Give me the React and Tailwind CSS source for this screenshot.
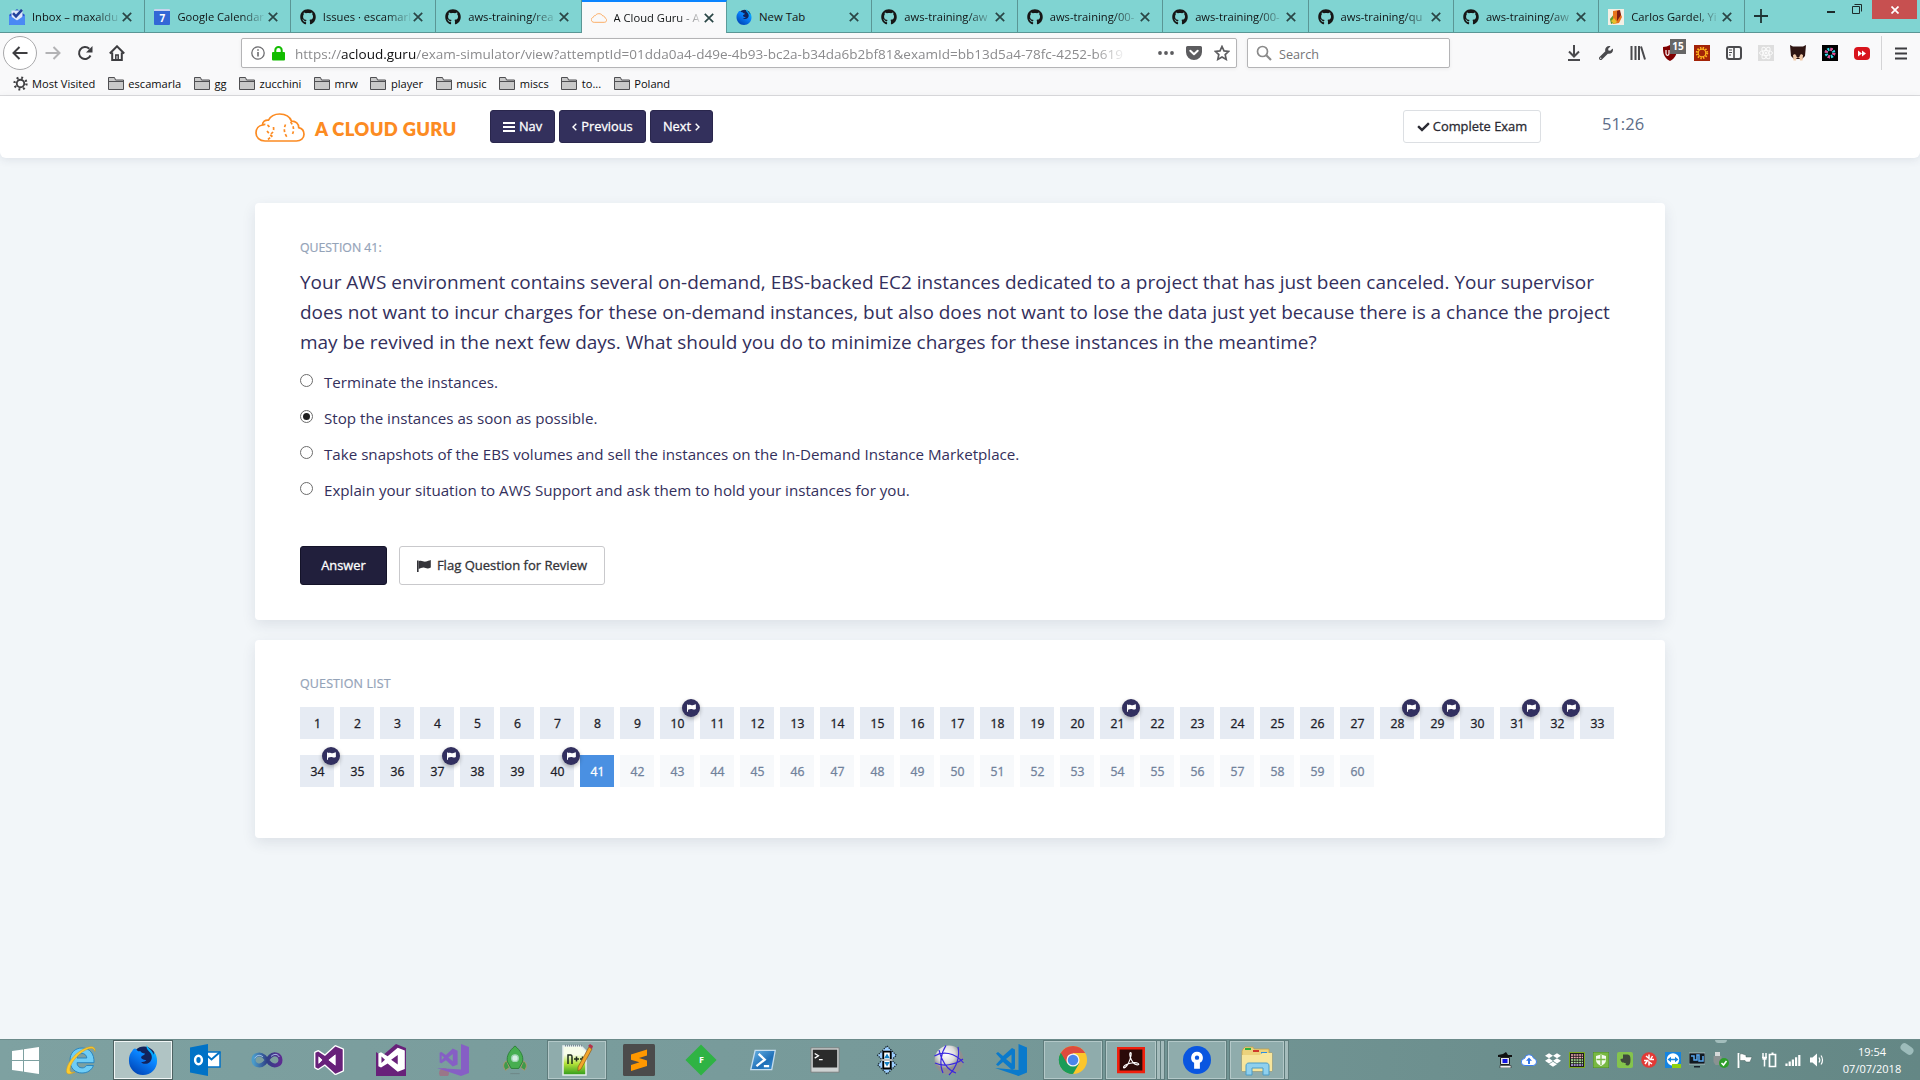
import React from "react";
import { FaGithub, FaCheck, FaWrench, FaDropbox } from "react-icons/fa";

/* ---------- tab icons ---------- */

function InboxIcon() {
  return (
    <svg width="16" height="16" viewBox="0 0 16 16" className="shrink-0">
      <path d="M0 6 8 0l8 6v9a1 1 0 0 1-1 1H1a1 1 0 0 1-1-1z" fill="#2a56c6" />
      <path d="M2.500 1.500h11V9L8 12 2.500 9z" fill="#dfe8fa" />
      <path d="M0 6l8 5.500L16 6v9a1 1 0 0 1-1 1H1a1 1 0 0 1-1-1z" fill="#4a8af4" />
      <path d="M4 4.200 7 7.300 13 .8" fill="none" stroke="#23409a" strokeWidth="2.600" />
    </svg>
  );
}

function CalendarIcon() {
  return (
    <div className="flex h-4 w-4 shrink-0 items-center justify-center rounded-[1px] border-t-2 border-[#c9d4ee] bg-[#3367d6] text-[10px] leading-none font-bold text-white">
      7
    </div>
  );
}

function CloudLogo({ className, stroke, dotted }) {
  return (
    <svg viewBox="0 0 50 29" className={className} fill="none" stroke="#fc8b22" strokeWidth={stroke}>
      <path d="M10 28C4.500 28 1 24.500 1 20c0-4.300 2.800-7.400 6.500-8 0-3.200 2.600-5.300 6-4.900C15.500 3.200 19.800 1 24.700 1c5.700 0 10.200 2.800 11.800 7.100 4.300-.2 7.300 2.600 7.200 6.500 3.200.8 5.300 3.200 5.300 6.600 0 4-3.200 6.800-7.600 6.800z" />
      {dotted && (
        <g strokeWidth="1.700" strokeDasharray="2.800 2.200">
          <path d="M7.500 12c3-1.200 5.600-.4 6.800 2" />
          <path d="M18.500 14c.5 3.500-.3 5.500-2.800 7M12 18l6.500 7.500M13 26.500l4.500-4" />
          <path d="M35.500 9c3.600 4 4 9.500 1 13.500M30.500 11.500c-1.800 4-1.600 8.500 1.500 12.500" />
        </g>
      )}
    </svg>
  );
}

function FirefoxDev({ className }) {
  return (
    <svg viewBox="0 0 32 32" className={className}>
      <defs>
        <linearGradient id="fxd" x1="0.900" y1="0" x2="0.300" y2="1">
          <stop offset="0" stopColor="#00d4ff" />
          <stop offset="0.450" stopColor="#0a84ff" />
          <stop offset="1" stopColor="#0046b8" />
        </linearGradient>
      </defs>
      <circle cx="17" cy="14" r="12.500" fill="#12235c" />
      <path d="M20 0c-.8 3 .5 5 3 7.500 3 3 3.300 7.500.5 10.500-3 3-8 2.500-9.500 0 2.500.5 4-.2 5.500-1.700-1.500-.6-3.500-.2-5-1.800-1-1.200-.3-2.500.8-3 1.800-.8 2.700-1.500 2.700-2.500-2.500 0-4-.8-5-2.500-2 .5-3 0-4-2C7.500 3 5.500 4 4.500 6.500 2 9.500 1 12.500 1 16.500 1 25 7.500 32 16 32s15-6.500 15-15c0-4-1.200-7.500-3.500-9.500.2 1.200.2 2 0 3C26 5.500 22 4.500 20 0z" fill="url(#fxd)" />
    </svg>
  );
}

function TangoIcon() {
  return (
    <svg width="16" height="16" viewBox="0 0 16 16" className="shrink-0">
      <path fill="#f4efe4" d="M0 0h16v16H0z" />
      <path fill="#5c9a2d" d="M2 10l5-6 1 9-5 2z" />
      <path fill="#e5731c" d="M5 2l6-1 3 7-3 6-6 1z" />
      <path fill="#7c1d12" d="M9 2l3-1 1 5-4 6z" />
      <path fill="#e8c02a" d="M3 12l3-3 3 4-3 2z" />
    </svg>
  );
}

const GitIcon = () => <FaGithub className="h-4 w-4 shrink-0 text-[#161616]" />;

const TABS = [
  [InboxIcon, "Inbox – maxaldu"],
  [CalendarIcon, "Google Calendar"],
  [GitIcon, "Issues · escamarl"],
  [GitIcon, "aws-training/rea"],
  [() => <CloudLogo className="h-4 w-4 shrink-0 opacity-70" stroke="3" />, "A Cloud Guru - A", true],
  [() => <FirefoxDev className="h-4 w-4 shrink-0" />, "New Tab"],
  [GitIcon, "aws-training/aw"],
  [GitIcon, "aws-training/00-"],
  [GitIcon, "aws-training/00-"],
  [GitIcon, "aws-training/qu"],
  [GitIcon, "aws-training/aw"],
  [TangoIcon, "Carlos Gardel, Yi"],
];

function Tab({ Icon, label, active }) {
  return (
    <div
      className={
        active
          ? "flex h-[33px] w-[145.4px] shrink-0 items-center border-t-2 border-r border-t-[#0a84ff] border-r-[#5c9c9b] bg-[#f9f9fa] pr-3 pl-[9px]"
          : "flex h-[33px] w-[145.4px] shrink-0 items-center border-r border-b border-[#5a9695] bg-[#80d4d2] pt-px pr-3 pl-[9px]"
      }
    >
      <Icon />
      <span
        className={
          label === "New Tab"
            ? "ml-[7px] pt-px text-[11.4px] whitespace-nowrap text-[#101314]"
            : "ml-[7px] w-[88px] pt-px text-[11.2px] whitespace-nowrap text-[#101314] mask-r-from-72% mask-r-to-102%"
        }
      >
        {label}
      </span>
      <svg width="10" height="10" viewBox="0 0 10 10" className="ml-auto shrink-0">
        <path d="M.8.800l8.400 8.400M9.200.800.800 9.200" stroke="#2a4646" strokeWidth="1.700" />
      </svg>
    </div>
  );
}

function TabStrip() {
  return (
    <div className="flex h-[33px] border-b border-[#5a9695] bg-[#80d4d2]">
      {TABS.map(([Icon, label, active], i) => (
        <Tab key={i} Icon={Icon} label={label} active={active} />
      ))}
      <svg width="14" height="14" viewBox="0 0 14 14" className="mt-[9px] ml-[9px]">
        <path d="M7 0v14M0 7h14" stroke="#1f3434" strokeWidth="1.800" />
      </svg>
      <div className="ml-auto flex items-start pr-[3px]">
        <div className="mt-[11px] mr-[17px] h-0.5 w-2 bg-[#1d2b2b]" />
        <svg width="11" height="11" viewBox="0 0 11 11" className="mt-1 mr-[9px]" fill="none" stroke="#1d2b2b">
          <path d="M.5 2.500h7v7h-7zM2.500.500h7v7" />
        </svg>
        <div className="flex h-[19px] w-[45px] items-center justify-center bg-[#c75050]">
          <svg width="8" height="8" viewBox="0 0 8 8">
            <path d="M.5.500l7 7M7.500.500l-7 7" stroke="#fff" strokeWidth="1.700" />
          </svg>
        </div>
      </div>
    </div>
  );
}

/* ---------- navigation bar ---------- */

function Search({ className }) {
  return (
    <svg viewBox="0 0 16 16" className={className} fill="none" stroke="#8a8a8a" strokeWidth="1.700">
      <circle cx="6.500" cy="6.500" r="5" />
      <path d="M10.300 10.300 15 15" strokeWidth="2.200" />
    </svg>
  );
}

function Extensions() {
  const cell = "flex w-8 items-center justify-center";
  return (
    <div className="flex h-8 items-center">
      <div className={cell}>
        <svg width="16" height="16" viewBox="0 0 16 16" fill="none" stroke="#4a4a4d" strokeWidth="2">
          <path d="M8 0v11M3 6.500 8 11.500l5-5M2 15h12" />
        </svg>
      </div>
      <div className={cell}>
        <FaWrench className="h-3.5 w-3.5 text-[#4a4a4d]" />
      </div>
      <div className={cell}>
        <svg width="16" height="16" viewBox="0 0 16 16" fill="none" stroke="#4a4a4d" strokeWidth="2">
          <path d="M1.500 1v14M5.500 1v14M9 1v14M11 1.500l4 13" />
        </svg>
      </div>
      <div className="relative flex w-8 items-center justify-center">
        <svg width="16" height="16" viewBox="0 0 16 16">
          <path d="M8 0c2 1.200 4.500 2 7 2 0 6-.5 10.500-7 14C1.500 12.500 1 8 1 2c2.500 0 5-.8 7-2z" fill="#800000" />
          <path d="M4 5v3.500c0 2.500 3 2.500 3 0V5" fill="none" stroke="#fff" strokeWidth="1.200" />
        </svg>
        <span className="absolute -top-1.5 left-4 h-[15px] w-4 bg-[#666] text-center text-[10px] leading-[15px] font-bold text-white">
          15
        </span>
      </div>
      <div className={cell}>
        <svg width="16" height="16" viewBox="0 0 16 16">
          <path fill="#a32308" d="M0 0h16v16H0z" />
          <circle cx="8" cy="8" r="5.200" fill="none" stroke="#ffb41f" strokeWidth="2" strokeDasharray="1.400 1.330" />
          <circle cx="8" cy="8" r="3.800" fill="none" stroke="#ffb41f" strokeWidth="1.200" />
        </svg>
      </div>
      <div className={cell}>
        <svg width="16" height="16" viewBox="0 0 16 16" fill="none" stroke="#4a4a4d">
          <rect x="1" y="2" width="14" height="12" rx="2" strokeWidth="2" />
          <path d="M8 2v12" strokeWidth="1.600" />
          <path d="M3 5h3M3 7.500h3M3 10h2" />
        </svg>
      </div>
      <div className={cell}>
        <svg width="16" height="16" viewBox="0 0 16 16" fill="none" stroke="#fbfbfb" strokeWidth="1">
          <path d="M0 0h16v16H0z" fill="#dedede" stroke="none" />
          <ellipse cx="8" cy="8" rx="6.500" ry="2.500" />
          <ellipse cx="8" cy="8" rx="6.500" ry="2.500" transform="rotate(60 8 8)" />
          <ellipse cx="8" cy="8" rx="6.500" ry="2.500" transform="rotate(120 8 8)" />
          <circle cx="8" cy="8" r="1" fill="#fbfbfb" />
        </svg>
      </div>
      <div className={cell}>
        <svg width="16" height="16" viewBox="0 0 16 16">
          <path d="M0 0l3 1.500h10L16 0l-1 11-3 3H4l-3-3z" fill="#2f1512" />
          <path d="M3 10l2-1 1.500 2h3L11 9l2 1-.5 5.500H10L9.500 13h-3L6 15.500H3.500z" fill="#f0c9a8" />
          <path d="M6 11h4l-2 2z" fill="#2f1512" />
        </svg>
      </div>
      <div className={cell}>
        <svg width="16" height="16" viewBox="0 0 16 16" fill="none" strokeWidth="3.200">
          <path d="M0 0h16v16H0z" fill="#000" />
          <circle cx="8" cy="8" r="3.800" stroke="#35d6e6" strokeDasharray="1.900 1.085" />
          <circle cx="8" cy="8" r="3.800" stroke="#f2418d" strokeDasharray="1.900 4.070" />
        </svg>
      </div>
      <div className={cell}>
        <svg width="16" height="16" viewBox="0 0 16 16">
          <rect y="2" width="16" height="13" rx="4" fill="#d8141c" />
          <path d="M4 5.500 8 8.500l-4 3zM8 5.500l4 3-4 3z" fill="#fff" />
        </svg>
      </div>
    </div>
  );
}

function NavBar() {
  return (
    <div className="flex h-10 items-center">
      <div className="ml-[3px] flex h-[34px] w-[34px] items-center justify-center rounded-full border border-[#a9a9ab] bg-white">
        <svg width="16" height="16" viewBox="0 0 16 16" fill="none" stroke="#3d3d40" strokeWidth="2">
          <path d="M15.500 8H1.500M7.500 2l-6 6 6 6" />
        </svg>
      </div>
      <svg width="16" height="16" viewBox="0 0 16 16" className="ml-2" fill="none" stroke="#b3b3b5" strokeWidth="2">
        <path d="M.5 8h14M8.500 2l6 6-6 6" />
      </svg>
      <svg width="16" height="16" viewBox="0 0 16 16" className="ml-4" fill="none" stroke="#3d3d40" strokeWidth="2">
        <path d="M13.500 10.500A6 6 0 1 1 12.300 3.800" />
        <path d="M15.500 1v6.500H9z" fill="#3d3d40" stroke="none" />
      </svg>
      <svg width="16" height="16" viewBox="0 0 16 16" className="ml-4" fill="none" stroke="#3d3d40" strokeWidth="2">
        <path d="M.8 8.500 8 1.300l7.200 7.200M3.200 7.500V15h9.600V7.500" />
        <path d="M6.800 15v-5h2.400v5" strokeWidth="1.500" />
      </svg>

      <div className="ml-[116px] flex h-[30px] w-[996px] items-center rounded-xs border border-[#b4b4b6] bg-white pr-1.5 pl-[9px] shadow-[0_1px_4px_rgba(0,0,0,0.06)]">
        <svg width="14" height="14" viewBox="0 0 14 14" fill="none" stroke="#6d6d70">
          <circle cx="7" cy="7" r="6.200" strokeWidth="1.300" />
          <path d="M7 6v4.500M7 3.300v1.500" strokeWidth="1.600" />
        </svg>
        <svg width="13" height="15" viewBox="0 0 13 15" className="ml-[7px]">
          <path d="M3.300 7V4.300a3.200 3.200 0 0 1 6.400 0V7" fill="none" stroke="#12bc00" strokeWidth="2" />
          <rect y="6" width="13" height="8.500" rx="1" fill="#12bc00" />
        </svg>
        <span className="ml-[10px] w-[832px] pt-[2px] text-[13.52px] whitespace-nowrap text-[#8b8b8d] mask-r-from-96% mask-r-to-100%">
          https://<span className="text-[#0c0c0d]">acloud.guru</span>
          /exam-simulator/view?attemptId=01dda0a4-d49e-4b93-bc2a-b34da6b2bf81&amp;examId=bb13d5a4-78fc-4252-b619
        </span>
        <svg width="16" height="4" viewBox="0 0 16 4" className="ml-auto" fill="#5c5c5f">
          <circle cx="2" cy="2" r="1.900" />
          <circle cx="8" cy="2" r="1.900" />
          <circle cx="14" cy="2" r="1.900" />
        </svg>
        <svg width="16" height="16" viewBox="0 0 16 16" className="ml-3">
          <path d="M1.500 1h13A1.500 1.500 0 0 1 16 2.500V7A8 8 0 0 1 0 7V2.500A1.500 1.500 0 0 1 1.500 1z" fill="#5c5c5f" />
          <path d="M4.300 5.800 8 9.300l3.700-3.500" fill="none" stroke="#fff" strokeWidth="2" strokeLinecap="round" strokeLinejoin="round" />
        </svg>
        <svg width="16" height="16" viewBox="0 0 16 16" className="ml-3" fill="none" stroke="#5c5c5f" strokeWidth="1.700">
          <path d="M8 1.500l2 4.400 4.700.5-3.500 3.200 1 4.800L8 12l-4.200 2.400 1-4.800L1.300 6.400 6 5.900z" />
        </svg>
      </div>

      <div className="ml-2.5 flex h-[30px] w-[203px] items-center rounded-xs border border-[#b4b4b6] bg-white pl-2 shadow-[0_1px_4px_rgba(0,0,0,0.06)]">
        <Search className="h-4 w-4" />
        <span className="ml-[7px] pt-[2px] text-[12.65px] text-[#757577]">Search</span>
      </div>

      <div className="ml-auto flex items-center">
        <Extensions />
        <div className="ml-[3px] h-[34px] w-px bg-[#d4d4d6]" />
        <svg width="12" height="13" viewBox="0 0 12 13" className="mr-[13px] ml-[13px]">
          <path d="M0 1.500h12M0 6.500h12M0 11.500h12" stroke="#3d3d40" strokeWidth="2" />
        </svg>
      </div>
    </div>
  );
}

const BOOKMARKS = ["escamarla", "gg", "zucchini", "mrw", "player", "music", "miscs", "to...", "Poland"];

function Bookmarks() {
  return (
    <div className="flex h-[22px] items-center gap-[12.6px] pl-[13px] text-[11.1px] text-[#0c0c0d]">
      <div className="flex items-center gap-1">
        <svg width="15" height="15" viewBox="0 0 16 16" fill="none" stroke="#3f3f42">
          <circle cx="8" cy="8" r="4" strokeWidth="2" />
          <circle cx="8" cy="8" r="6.400" strokeWidth="2.400" strokeDasharray="2 3.030" />
        </svg>
        <span>Most Visited</span>
      </div>
      {BOOKMARKS.map((b) => (
        <div key={b} className="flex items-center gap-[4.5px]">
          <svg width="16" height="14" viewBox="0 0 16 14" fill="#c9c9c9" stroke="#4f4f52">
            <path d="M.5 12.500v-12h6l1 2.500h8v9.500z" />
            <path d="M1 4.500h14" />
          </svg>
          <span>{b}</span>
        </div>
      ))}
    </div>
  );
}

/* ---------- exam page ---------- */

const strongText = "[-webkit-text-stroke:0.3px_currentColor]";

function Header() {
  return (
    <header className="flex h-[62px] items-start rounded-b-md bg-white pl-[255px] shadow-[0_2px_8px_rgba(50,60,90,0.1)]">
      <CloudLogo className="mt-[17px] h-[29px] w-[50px]" stroke="1.700" dotted />
      <span className="mt-[18px] ml-2.5 w-[165px] font-['Lato'] text-[18.4px] leading-[30px] font-extrabold tracking-[0.32px] whitespace-nowrap text-[#fc8b22]">
        A CLOUD GURU
      </span>
      <div className={`mt-3.5 ml-[10px] flex gap-1 text-[12.8px] text-white ${strongText}`}>
        <button className="flex h-[33px] w-[65px] items-center justify-center gap-1 rounded-[3px] border border-[#29264c] bg-[#33305c] pt-px">
          <svg width="12" height="10" viewBox="0 0 12 10">
            <path d="M0 1h12M0 5h12M0 9h12" stroke="#fff" strokeWidth="2" />
          </svg>
          Nav
        </button>
        <button className="flex h-[33px] w-[87px] items-center justify-center gap-1 rounded-[3px] border border-[#29264c] bg-[#33305c] pt-px">
          <svg width="5" height="8" viewBox="0 0 5 8" fill="none" stroke="#fff" strokeWidth="1.400">
            <path d="M4.300.700 1 4l3.300 3.300" />
          </svg>
          Previous
        </button>
        <button className="flex h-[33px] w-[63px] items-center justify-center gap-1 rounded-[3px] border border-[#29264c] bg-[#33305c] pt-px">
          Next
          <svg width="5" height="8" viewBox="0 0 5 8" fill="none" stroke="#fff" strokeWidth="1.400">
            <path d="M.7.700 4 4 .700 7.300" />
          </svg>
        </button>
      </div>
      <button className={`mt-3.5 ml-[690px] flex h-[33px] w-[138px] items-center justify-center gap-[3px] rounded-[3px] border border-[#dcdfe3] bg-white pt-px text-[12.9px] text-[#2b2b33] ${strongText}`}>
        <FaCheck className="h-3 w-[13px]" />
        Complete Exam
      </button>
      <span className="mt-4 ml-[61px] text-[16.5px] leading-6 text-[#5d6d88]">51:26</span>
    </header>
  );
}

const OPTIONS = [
  "Terminate the instances.",
  "Stop the instances as soon as possible.",
  "Take snapshots of the EBS volumes and sell the instances on the In-Demand Instance Marketplace.",
  "Explain your situation to AWS Support and ask them to hold your instances for you.",
];

function QuestionCard() {
  return (
    <section className="h-[417px] rounded-[4px] bg-white px-[45px] pt-[37px] shadow-[0_5px_14px_rgba(40,45,75,0.1)]">
      <h2 className="text-[12.3px] leading-4 text-[#94a3b8] [-webkit-text-stroke:0.2px_currentColor]">QUESTION 41:</h2>
      <p className="mt-[11px] text-[18.99px] leading-[30px] whitespace-nowrap text-[#332f5c]">
        Your AWS environment contains several on-demand, EBS-backed EC2 instances dedicated to a project that has just been canceled. Your supervisor
        <br />
        does not want to incur charges for these on-demand instances, but also does not want to lose the data just yet because there is a chance the project
        <br />
        may be revived in the next few days. What should you do to minimize charges for these instances in the meantime?
      </p>
      <div className="mt-2">
        {OPTIONS.map((o, i) => (
          <label key={o} className="flex h-9 items-start text-[15.15px] leading-[34px] text-[#332f5c]">
            <span className="mt-[9px] flex h-[13px] w-[13px] items-center justify-center rounded-full border border-[#6c6c6c] bg-white">
              {i === 1 && <span className="h-[7px] w-[7px] rounded-full bg-[#1e1e1e]" />}
            </span>
            <span className="ml-[11px]">{o}</span>
          </label>
        ))}
      </div>
      <div className={`mt-[37px] flex gap-3 ${strongText}`}>
        <button className="h-[39px] w-[87px] rounded-[3px] border border-[#141329] bg-[#211f3c] pt-px text-[12.85px] text-white">Answer</button>
        <button className="flex h-[39px] w-[206px] items-center justify-center gap-[6px] rounded-[3px] border border-[#c9c9cc] bg-white pt-px text-[13.05px] text-[#333338]">
          <FlagMark className="h-[12px] w-[14px]" />
          Flag Question for Review
        </button>
      </div>
    </section>
  );
}

function FlagMark({ className }) {
  return (
    <svg viewBox="0 0 14 12" className={className} fill="currentColor">
      <path d="M0 .5h1.600V12H0z" />
      <path d="M1.600 1.300c3.400-1.500 4.800 1 7.400.3C10.300 1.300 12 .5 13.800 0v7.600c-4 2-5.200-.2-7.400 0-1.500.1-3.300.6-4.800 1.300z" />
    </svg>
  );
}

const FLAGGED = [10, 21, 28, 29, 31, 32, 34, 37, 40];
const CURRENT = 41;

function QuestionNumber({ n }) {
  let tone = "bg-[#e6ebf3] text-[#1c1c28]";
  if (n === CURRENT) tone = "bg-[#4a90e2] text-white";
  if (n > CURRENT) tone = "bg-[#f7f9fb] text-[#71829b]";
  return (
    <div className={`relative flex h-8 w-[34px] items-center justify-center pt-[2px] pl-px text-[12.2px] ${strongText} ${tone}`}>
      {n}
      {FLAGGED.includes(n) && (
        <span className="absolute -top-2 -right-1.5 z-10 flex h-[18px] w-[18px] items-center justify-center rounded-full bg-[#33305f] text-white shadow-[0_2px_4px_rgba(0,0,0,0.3)]">
          <FlagMark className="h-2 w-[9px]" />
        </span>
      )}
    </div>
  );
}

function QuestionList() {
  return (
    <section className="mt-5 h-[198px] rounded-[4px] bg-white px-[45px] pt-9 shadow-[0_5px_14px_rgba(40,45,75,0.1)]">
      <h2 className="text-[12.5px] leading-4 tracking-[0.12px] text-[#94a3b8] [-webkit-text-stroke:0.2px_currentColor]">QUESTION LIST</h2>
      <div className="mt-[15px] flex flex-wrap gap-x-1.5 gap-y-4">
        {Array.from({ length: 60 }, (_, i) => (
          <QuestionNumber key={i} n={i + 1} />
        ))}
      </div>
    </section>
  );
}

/* ---------- taskbar ---------- */

const VsMark = ({ fill, outline }) => (
  <g>
    {outline && (
      <path d="M23 1 11.500 11.500 4 6.500 1 8v16l3 1.500 7.500-5L23 31l8-3.500V4.500z" fill={outline} stroke={outline} strokeWidth="3" strokeLinejoin="round" />
    )}
    <path d="M23 1 11.500 11.500 4 6.500 1 8v16l3 1.500 7.500-5L23 31l8-3.500V4.500zM4.500 12l4 4-4 4zM23 10v12l-7.500-6z" fill={fill} fillRule="evenodd" />
    {outline && <path d="M4.500 12l4 4-4 4zM23 10v12l-7.500-6z" fill={outline} />}
  </g>
);

const Svg = ({ children, size = "h-8 w-8" }) => (
  <svg viewBox="0 0 32 32" className={size}>
    {children}
  </svg>
);

const APPS = [
  {
    key: "ie",
    icon: (
      <Svg>
        <path d="M17 4C9.800 4 5 9 5 16.500S9.800 29 17 29c5.400 0 9.500-2.700 11.500-7.500h-7c-1 1.600-2.500 2.400-4.400 2.400-3 0-5-2-5.100-5.200h17C29.500 9.500 24.500 4 17 4zm-5 10c.5-2.800 2.300-4.500 5-4.500s4.500 1.700 4.800 4.500z" fill="#6fcdf6" stroke="#2a86c0" strokeWidth="1" />
        <path d="M30 7.500c1-4-2.500-6-8-4C12 7 3 17 1.500 25.500.5 31 5 31 10 28c-3.500 1-5.500.2-5-3.500C6 17 16 7.500 23 5c4-1.400 6-.5 7 2.500z" fill="#fccb2e" stroke="#d49a16" strokeWidth=".5" />
      </Svg>
    ),
  },
  { key: "firefox", open: true, active: true, icon: <FirefoxDev className="h-[30px] w-[30px]" /> },
  {
    key: "outlook",
    icon: (
      <Svg>
        <path d="M14 8h17v15H14z" fill="#fff" stroke="#0072c6" strokeWidth="1.500" />
        <path d="M14 8l8.500 7.500L31 8" fill="none" stroke="#0072c6" strokeWidth="2" />
        <path d="M1 3.500 19 0v32L1 28.500z" fill="#0072c6" />
        <ellipse cx="9.500" cy="16" rx="3.400" ry="4.300" fill="none" stroke="#fff" strokeWidth="2.500" />
      </Svg>
    ),
  },
  {
    key: "vsonline",
    icon: (
      <svg viewBox="0 0 32 18" className="h-[18px] w-8" fill="none" strokeLinecap="round">
        <defs>
          <linearGradient id="inf">
            <stop offset="0" stopColor="#4a9bc9" />
            <stop offset=".5" stopColor="#2e3f86" />
            <stop offset="1" stopColor="#5c2d91" />
          </linearGradient>
        </defs>
        <path d="M19 5.500C23 1.500 29.500 3.500 29.500 9S23 16 19 12.500L13 5.500C9 1.800 2.500 3.500 2.500 9s6.500 7.200 10.500 3.500z" stroke="url(#inf)" strokeWidth="4" />
        <path d="M4 7c1.500-3 5-3.500 7.500-1.500M20.500 5c3-2.500 6-2 7.500.5" stroke="#b5cdf2" strokeWidth="1" />
      </svg>
    ),
  },
  { key: "vs", icon: <Svg><g transform="translate(1.500 1.500) scale(.91)"><VsMark fill="#68217a" outline="#fff" /></g></Svg> },
  {
    key: "vsblend",
    icon: (
      <Svg>
        <path d="M1 8 7 12 21 0l10 4v28H1z" fill="#68217a" />
        <g transform="translate(2.500 3) scale(.88 .8)">
          <VsMark fill="#fff" />
        </g>
      </Svg>
    ),
  },
  {
    key: "vspreview",
    icon: (
      <Svg>
        <circle cx="7" cy="29" r="5" fill="#a8677f" opacity=".7" />
        <path d="M24 0l8 3v26l-8 3L0 24l24 1.500z" fill="#865fc5" />
        <g transform="translate(2 4) scale(.6)">
          <VsMark fill="#865fc5" />
        </g>
      </Svg>
    ),
  },
  {
    key: "rocket",
    icon: (
      <Svg size="h-[30px] w-[30px]">
        <path d="M7 17c-4 2-4 7-1 10l4-3zM25 17c4 2 4 7 1 10l-4-3z" fill="#3f9a4b" stroke="#b1976a" />
        <path d="M16 1c6 5 9.500 11 8 17l-4 7h-8l-4-7C6.500 12 10 6 16 1z" fill="#47ae51" stroke="#2c7f38" />
        <circle cx="16" cy="14" r="3.500" fill="#d7efe4" stroke="#9fd3b2" strokeWidth="1.500" />
        <path d="M11 30.500h10" stroke="#6d8686" />
      </Svg>
    ),
  },
  {
    key: "npp",
    open: true,
    icon: (
      <Svg>
        <defs>
          <linearGradient id="npp" x2="0" y2="1">
            <stop offset=".3" stopColor="#f7fdea" />
            <stop offset=".6" stopColor="#b6e33a" />
            <stop offset="1" stopColor="#2d9a1a" />
          </linearGradient>
        </defs>
        <path d="M2 2h18l5 5v24H2z" fill="url(#npp)" stroke="#e8eeee" strokeWidth="1.500" />
        <path d="M4 1.500h18" stroke="#7b8c96" strokeWidth="2" strokeDasharray="1 1" />
        <path d="M7 20v-9h3c1 0 1 1 1 2v7M13 15h5M15.500 12.500v5M19 15h5M21.500 12.500v5" stroke="#1d2b1d" strokeWidth="1.500" fill="none" />
        <path d="M28 3l3 2-11 20-3 2v-4z" fill="#f2a52a" stroke="#8b5a1c" strokeWidth=".7" />
        <path d="M27 2l2-2 3 2-1 3z" fill="#b4324a" />
      </Svg>
    ),
  },
  {
    key: "sublime",
    icon: (
      <Svg>
        <rect width="32" height="32" rx="1.500" fill="#4b4b4b" />
        <path d="M8 10.500 24 5.500v6l-8 2.600 8 2.500v5.500L8 27v-6l8.500-2.700L8 15.700z" fill="#ff9800" />
      </Svg>
    ),
  },
  {
    key: "fork",
    icon: (
      <div className="flex h-8 w-8 items-center justify-center">
        <div className="flex h-[22px] w-[22px] rotate-45 items-center justify-center bg-[#2fb344]">
          <span className="-rotate-45 text-[9px] font-bold text-white">F</span>
        </div>
      </div>
    ),
  },
  {
    key: "powershell",
    icon: (
      <Svg size="h-7 w-7">
        <defs>
          <linearGradient id="psh" x2="1" y2="1">
            <stop offset="0" stopColor="#6db6e6" />
            <stop offset=".6" stopColor="#1f6fb8" />
            <stop offset="1" stopColor="#3f94d2" />
          </linearGradient>
        </defs>
        <path d="M7 5h23l-4 22H2z" fill="url(#psh)" stroke="#c3dcee" strokeWidth="1.500" />
        <path d="M11 9l7 6.500L8.500 23M17 23h6" fill="none" stroke="#fff" strokeWidth="2.600" />
      </Svg>
    ),
  },
  {
    key: "terminal",
    icon: (
      <Svg size="h-[30px] w-[30px]">
        <path d="M1 3h30v26H1z" fill="#cfd2d2" stroke="#7b8080" />
        <path d="M3 5h26v19H3z" fill="#2b2b2b" />
        <path d="M5 9l4 2.500L5 14M9.500 15.500h4" fill="none" stroke="#fff" strokeWidth="1.400" />
      </Svg>
    ),
  },
  {
    key: "arrows",
    icon: (
      <Svg size="h-[30px] w-[30px]">
        <path d="M16 1 26 11l-5 5 5 5-10 10L6 21l5-5-5-5z" fill="#9dcfff" stroke="#1a2a33" strokeWidth="1.300" strokeDasharray="1.500 1" />
        <path d="M12 7h8v18h-8z" fill="#fff" stroke="#000" strokeWidth="2" />
        <path d="M16 9l3 5h-6zM16 23l3-5h-6z" fill="#1681c4" />
        <path d="M10 16h12" stroke="#b9b9b9" strokeWidth="2" />
      </Svg>
    ),
  },
  {
    key: "globe",
    icon: (
      <Svg>
        <defs>
          <radialGradient id="glb" cx=".4" cy=".3">
            <stop offset="0" stopColor="#fff" />
            <stop offset=".6" stopColor="#dcdcdc" />
            <stop offset="1" stopColor="#8f8f8f" />
          </radialGradient>
        </defs>
        <circle cx="16" cy="16" r="14.500" fill="url(#glb)" />
        <g fill="none" stroke="#3828e0" strokeWidth="1.200">
          <path d="M1.500 12C9 7 22 8 30.500 19M2 19c8 4 20 2 28-4M6 6c2 10 8 20 17 23M25 3c2 9-1 20-9 28M13 1.500C8 9 6 20 10 29" />
        </g>
      </Svg>
    ),
  },
  {
    key: "vscode",
    icon: (
      <Svg>
        <path d="M23.500 0 32 3.500v25L23.500 32 0 24l23.500 2z" fill="#0a7acc" />
        <path d="M3 8l5 4 9-8 3 1.500v19L17 26l-9-8-5 4-2-1.500L6 15 1 9.500zM16.500 10.500 11 15l5.500 4.500z" fill="#0a7acc" fillRule="evenodd" />
      </Svg>
    ),
  },
  {
    key: "chrome",
    open: true,
    icon: (
      <Svg size="h-[30px] w-[30px]">
        <circle cx="16" cy="16" r="15" fill="#fbc62c" />
        <path d="M16 16 3 8.500A15 15 0 0 1 29 8.500H16z" fill="#dd4b3e" />
        <path d="M3 8.500A15 15 0 0 0 16 31l6.500-11.200L16 16z" fill="#1a9c58" />
        <path d="M3 8.500 9.500 19.800 16 16V8.500z" fill="#dd4b3e" />
        <path d="M3 8.500 9.500 19.800 16 22l-1 9A15 15 0 0 1 3 8.500z" fill="#1a9c58" />
        <circle cx="16" cy="16" r="7" fill="#f4f4f4" />
        <circle cx="16" cy="16" r="5.600" fill="#4a86ea" />
      </Svg>
    ),
  },
  {
    key: "acrobat",
    open: true,
    stack: 2,
    icon: (
      <Svg size="h-7 w-7">
        <path d="M1.500 2.500h29v27h-29z" fill="#2a0a08" stroke="#f0200e" strokeWidth="3" />
        <path d="M15.500 7.500c-1.500 0-1 5 1 8.500s5 6 7.500 5.500-.5-3-5-2.500-11.500 3-11.500 5.200 3.500 0 6-5.500 3.500-11.200 2-11.200z" fill="none" stroke="#fff" strokeWidth="1.300" />
      </Svg>
    ),
  },
  {
    key: "sourcetree",
    open: true,
    icon: (
      <Svg size="h-7 w-7">
        <circle cx="16" cy="16" r="16" fill="#0a56e0" />
        <path d="M16 6.500a6.800 6.800 0 0 1 3.300 12.700V26h-6.600v-6.800A6.800 6.800 0 0 1 16 6.500z" fill="#fff" />
        <circle cx="16" cy="13.300" r="2.500" fill="#0a56e0" />
      </Svg>
    ),
  },
  {
    key: "explorer",
    open: true,
    stack: 1,
    icon: (
      <Svg>
        <path d="M2 5 4 3h8l1 2h15v4h3v18H1V7z" fill="#ecd27c" stroke="#c29f45" strokeWidth=".7" />
        <path d="M4 4h6v2H4z" fill="#2fae3e" />
        <path d="M12 6h6v2h-6z" fill="#cf3a2b" />
        <path d="M20 8h6v2h-6z" fill="#2d8ee0" />
        <path d="M1 11h18l2-2h10v18H1z" fill="#f7e59c" />
        <path d="M5 31V22c0-2 1-3 3-3h17c2 0 3 1 3 3v9h-6v-7H11v7z" fill="#8fd0ee" stroke="#4a9cc7" />
      </Svg>
    ),
  },
];

const TRAY = [
  <>
    <path d="M1 3l5-1 3-2 2 3h4v2H9v2H6V5H1z" fill="#111" />
    <path d="M3.500 5.500h9v7h-9z" fill="#e6e6e6" stroke="#222" />
    <path d="M5.500 7h5v4h-5z" fill="#1414e6" />
    <path d="M3 13.500h11V16H3z" fill="#f0f0f0" stroke="#222" strokeWidth=".6" />
  </>,
  <>
    <path d="M4 13.500a3.500 3.500 0 0 1-.4-7 4.600 4.600 0 0 1 9-.3 3.700 3.700 0 0 1-.4 7.300z" fill="#fff" stroke="#3c7ff0" strokeWidth="1" />
    <path d="M8 5.500l3 3.300H9V12H7V8.800H5z" fill="#2f74ea" />
  </>,
  null,
  <>
    <path d="M0 0h16v16H0z" fill="#7ba81f" />
    <path d="M1 1h14v14H1z" fill="#1c1c1c" />
    <path d="M2 3h12M2 5.500h12" stroke="#f0a8b0" strokeDasharray="2 .7" strokeWidth="1.600" />
    <path d="M2 8h12M2 10.500h12" stroke="#b4e89c" strokeDasharray="2 .7" strokeWidth="1.600" />
    <path d="M2 13h12" stroke="#c4a8f8" strokeDasharray="2 .7" strokeWidth="1.600" />
  </>,
  <>
    <rect width="16" height="16" rx="1.500" fill="#78b843" stroke="#4c8f28" />
    <path d="M8 2.500 13 4v4c0 3-2 4.500-5 6-3-1.500-5-3-5-6V4z" fill="#f4faef" />
    <path d="M8 3v10M3.500 7.500h9" stroke="#78b843" strokeWidth="1.300" />
  </>,
  <>
    <rect width="16" height="16" rx="2" fill="#84c44c" />
    <path d="M6 2.500h3.500c3 0 4 1 4 5s-1 6-3 6-2.500-1.500-1.500-2.500c-3 0-5.500-.5-5.500-4l2.500-.5z" fill="#3f4a3c" />
  </>,
  <>
    <circle cx="8" cy="8" r="7.800" fill="#e23a36" />
    <path d="M8 2.500v4L5 4M3 8.500h3.500L4 12M8 13.500V10l3 2M13 7.500H9.500L11.500 4" stroke="#fff" strokeWidth="1.500" fill="none" />
  </>,
  <>
    <path d="M0 0h16v16H0z" fill="#1584e0" />
    <circle cx="8" cy="7.500" r="6.200" fill="#fff" />
    <path d="M2.500 7.500 6 4.800v2h4v-2l3.500 2.700L10 10.200v-2H6v2z" fill="#1584e0" />
    <path d="M7 12h9v4H7z" fill="#8fd10f" />
  </>,
  <>
    <path d="M0 1h16v11H0z" fill="#101820" stroke="#cfdede" strokeWidth=".6" />
    <path d="M2 4h3v4h3V3h2v6h4V4" fill="none" stroke="#58a8f0" strokeWidth="1.500" />
    <path d="M5 14h6v1.500H5z" fill="#17202a" />
  </>,
  <>
    <path d="M2 0h5v4H2z" fill="#d5d9d9" />
    <path d="M.5 4h8v6l-2 3h-4l-2-3z" fill="#8a9292" />
    <circle cx="11" cy="11" r="5" fill="#2e9e2a" />
    <path d="M8.500 11l2 2 3-4" stroke="#fff" strokeWidth="1.600" fill="none" />
  </>,
  <>
    <path d="M1.500 1v15" stroke="#fff" strokeWidth="1.800" />
    <path d="M3 2c3-1 4 1 6 1v2h6l-2 5H9l-1-1.500H3z" fill="#fff" stroke="#47605f" strokeWidth=".5" />
  </>,
  <>
    <path d="M8.500 2.500h6v12h-6z" fill="none" stroke="#fff" strokeWidth="1.700" />
    <path d="M10.500.500h2v2h-2z" fill="#fff" />
    <path d="M2 1v4M5 1v4M1 5.500h5M3.500 5v9.500M1.500 7h4" stroke="#fff" strokeWidth="1.500" />
  </>,
  <>
    <path d="M1.500 14v-2.500M4.700 14v-4.500M7.900 14V7.500M11.100 14V5.200M14.300 14V3" stroke="#fff" strokeWidth="2.200" />
  </>,
  <>
    <path d="M1 5.500h2.500L8 1.500v13l-4.500-4H1z" fill="#fff" />
    <path d="M10 5.500c1 1.500 1 3.500 0 5M12 3.500c2 2.500 2 6.500 0 9" fill="none" stroke="#fff" strokeWidth="1.200" />
  </>,
];

function TaskButton({ app }) {
  if (!app.open) return <div className="flex h-10 w-[60px] items-center justify-center">{app.icon}</div>;
  const face = app.active
    ? "flex h-10 min-w-0 flex-1 items-center justify-center border border-[#4d6262] bg-[#b0c4c4] inset-ring inset-ring-[#f0f6f6]"
    : "flex h-10 min-w-0 flex-1 items-center justify-center border border-[#5f7c7c] bg-[#8facac] inset-ring inset-ring-[#b3c8c8]";
  return (
    <div className="flex h-10 w-[60px]">
      <div className={face}>{app.icon}</div>
      {Array.from({ length: app.stack || 0 }, (_, i) => (
        <div key={i} className="h-10 w-1 border border-l-0 border-[#5f7c7c] bg-[#a5bcbc]" />
      ))}
    </div>
  );
}

function Taskbar() {
  return (
    <footer className="relative flex h-[41px] items-center overflow-hidden border-t border-[#6c8b8b] bg-linear-to-r from-[#7ea1a1] via-[#769999] to-[#648785]">
      <div className="absolute top-[5px] right-[6px] h-2 w-3.5 rotate-[35deg] rounded-full bg-[#9dbcbb]" />
      <div className="absolute -top-1 right-[193px] h-[7px] w-3 rounded-full bg-[#a3bebd]" />
      <div className="flex w-[51px] justify-center">
        <svg width="27" height="27" viewBox="0 0 27 27" fill="#fff">
          <path d="M0 4l11-1.500V13H0zM12 2.300 27 0v13H12zM0 14h11v10.500L0 23zM12 14h15v13l-15-2.200z" />
        </svg>
      </div>
      <div className="flex gap-0.5">
        {APPS.map((app) => (
          <TaskButton key={app.key} app={app} />
        ))}
      </div>
      <div className="ml-auto flex items-center gap-2">
        {TRAY.map((icon, i) =>
          icon ? (
            <svg key={i} width="16" height="16" viewBox="0 0 16 16">
              {icon}
            </svg>
          ) : (
            <FaDropbox key={i} className="h-4 w-4 text-white" />
          )
        )}
      </div>
      <div className="mr-[18px] ml-[17px] w-[60px] text-center text-[11px] leading-[17px] text-white">
        <div>19:54</div>
        <div>07/07/2018</div>
      </div>
    </footer>
  );
}

export default function App() {
  return (
    <div className="flex h-[1080px] w-[1920px] flex-col overflow-hidden bg-[#f2f6f9] font-['Open_Sans','Noto_Sans',sans-serif]">
      <TabStrip />
      <div className="flex h-[63px] flex-col border-b border-[#dcdcde] bg-[#f9f9fa]">
        <NavBar />
        <Bookmarks />
      </div>
      <Header />
      <main className="mx-auto mt-[45px] w-[1410px] flex-1">
        <QuestionCard />
        <QuestionList />
      </main>
      <Taskbar />
    </div>
  );
}
